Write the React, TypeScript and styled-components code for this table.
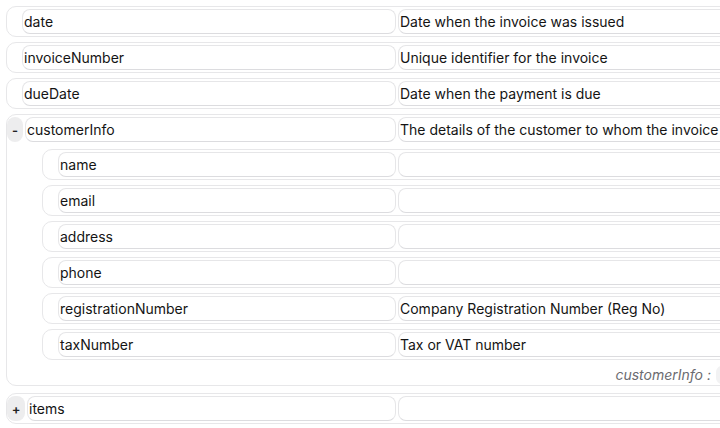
import React from "react";
import styled, { createGlobalStyle } from "styled-components";

const Global = createGlobalStyle`
  html, body { margin: 0; padding: 0; background: #ffffff; overflow: hidden; }
  body { font-family: Inter, "Noto Sans", sans-serif; color: #141414; }
`;

const Page = styled.div`
  width: 1200px;
  padding: 6px 0 0 6px;
  display: flex;
  flex-direction: column;
  gap: 5px;
`;

const FieldRow = styled.div<{ $depth: number; $bare?: boolean; $offset?: number }>`
  display: flex;
  align-items: center;
  height: ${(p) => (p.$bare ? 29 : 31)}px;
  box-sizing: border-box;
  border: ${(p) => (p.$bare ? "none" : "1px solid #e7e7e9")};
  border-radius: 10px;
  margin-left: ${(p) => (p.$depth > 0 ? 35 : 0)}px;
  margin-top: ${(p) => p.$offset ?? 0}px;
`;

const Left = styled.div<{ $depth: number }>`
  display: flex;
  align-items: center;
  height: 100%;
  width: ${(p) => 389 - p.$depth * 36}px;
  flex: none;
`;

const Slot = styled.div`
  width: 15px;
  flex: none;
`;

const Toggle = styled.div<{ $wide?: boolean }>`
  width: ${(p) => (p.$wide ? 18 : 16)}px;
  height: 25px;
  margin-right: 2px;
  flex: none;
  border-radius: 8px;
  background: #ededee;
  display: flex;
  align-items: center;
  justify-content: center;
  font-size: 13px;
  font-weight: 600;
  color: #222;
`;

const Input = styled.div`
  height: 25px;
  box-sizing: border-box;
  border: 1px solid #e6e6e8;
  border-bottom-color: #dcdcdf;
  border-radius: 8px;
  display: flex;
  align-items: center;
  padding-left: 1px;
  font-size: 14px;
  white-space: nowrap;
  overflow: hidden;
  color: #141414;
`;

const KeyInput = styled(Input)`
  flex: 1;
`;

const ValueInput = styled(Input)`
  margin-left: 2px;
  width: 700px;
  flex: none;
`;

const Group = styled.div`
  border: 1px solid #e7e7e9;
  border-radius: 10px;
  display: flex;
  flex-direction: column;
  gap: 5px;
`;

const Footer = styled.div`
  height: 19px;
  display: flex;
  align-items: center;
  margin-bottom: 1px;
`;

const FooterLabel = styled.div`
  width: 704px;
  flex: none;
  text-align: right;
  font-size: 14px;
  font-style: italic;
  color: #6b6b70;
`;

const FooterInput = styled.div`
  margin-left: 5px;
  width: 200px;
  height: 18px;
  border-radius: 6px;
  background: #f2f2f3;
`;

type Field = { name: string; desc?: string };

const Row: React.FC<{
  field: Field;
  depth: number;
  toggle?: string;
  bare?: boolean;
  offset?: number;
}> = ({ field, depth, toggle, bare, offset }) => (
  <FieldRow $depth={depth} $bare={bare} $offset={offset}>
    <Left $depth={depth}>
      {toggle ? <Toggle $wide={toggle === "+"}>{toggle}</Toggle> : <Slot />}
      <KeyInput>{field.name}</KeyInput>
    </Left>
    <ValueInput>{field.desc ?? ""}</ValueInput>
  </FieldRow>
);

const top: Field[] = [
  { name: "date", desc: "Date when the invoice was issued" },
  { name: "invoiceNumber", desc: "Unique identifier for the invoice" },
  { name: "dueDate", desc: "Date when the payment is due" },
];

const customer: Field[] = [
  { name: "name" },
  { name: "email" },
  { name: "address" },
  { name: "phone" },
  { name: "registrationNumber", desc: "Company Registration Number (Reg No)" },
  { name: "taxNumber", desc: "Tax or VAT number" },
];

export default function App() {
  return (
    <>
      <Global />
      <Page>
        {top.map((f) => (
          <Row key={f.name} field={f} depth={0} />
        ))}
        <Group>
          <Row
            field={{
              name: "customerInfo",
              desc: "The details of the customer to whom the invoice",
            }}
            depth={0}
            toggle="-"
            bare
          />
          {customer.map((f) => (
            <Row key={f.name} field={f} depth={1} />
          ))}
          <Footer>
            <FooterLabel>customerInfo :</FooterLabel>
            <FooterInput />
          </Footer>
        </Group>
        <Row field={{ name: "items" }} depth={0} toggle="+" offset={2} />
      </Page>
    </>
  );
}
